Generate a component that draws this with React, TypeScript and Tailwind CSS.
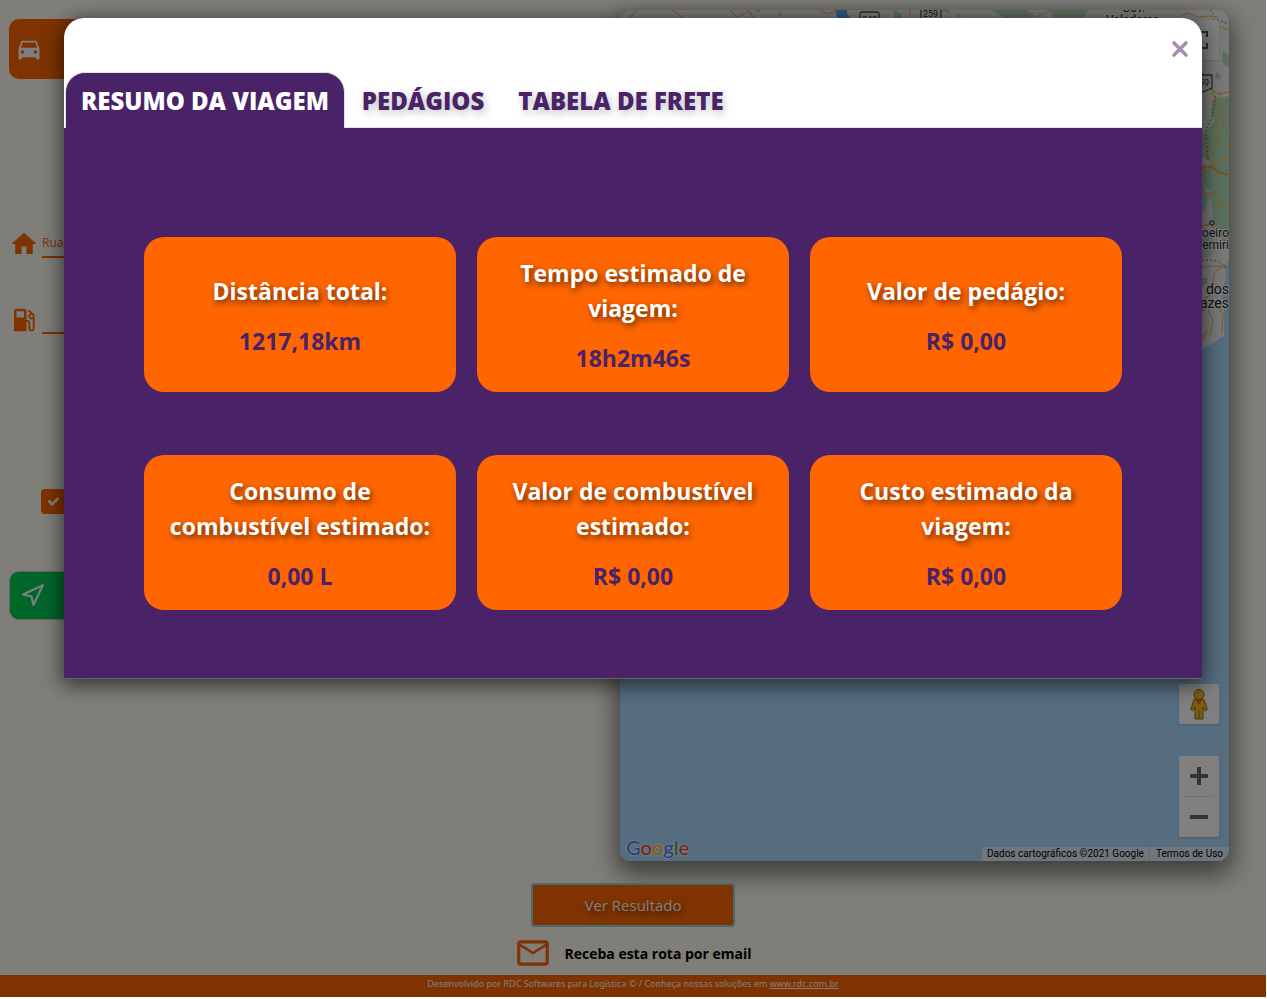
import React from "react";
import { MdDirectionsCar, MdHome, MdLocalGasStation, MdMailOutline } from "react-icons/md";
import { FaCheck } from "react-icons/fa";
import { FiNavigation } from "react-icons/fi";

const tabs = ["RESUMO DA VIAGEM", "PEDÁGIOS", "TABELA DE FRETE"];

const cards = [
  { title: "Distância total:", value: "1217,18km" },
  { title: "Tempo estimado de viagem:", value: "18h2m46s" },
  { title: "Valor de pedágio:", value: "R$ 0,00" },
  { title: "Consumo de combustível estimado:", value: "0,00 L" },
  { title: "Valor de combustível estimado:", value: "R$ 0,00" },
  { title: "Custo estimado da viagem:", value: "R$ 0,00" },
];

const google = [
  { letter: "G", color: "text-[#4285f4]" },
  { letter: "o", color: "text-[#ea4335]" },
  { letter: "o", color: "text-[#fbbc05]" },
  { letter: "g", color: "text-[#4285f4]" },
  { letter: "l", color: "text-[#34a853]" },
  { letter: "e", color: "text-[#ea4335]" },
];

function MapDrawing() {
  return (
    <svg
      viewBox="0 0 609 851"
      preserveAspectRatio="xMaxYMin slice"
      className="absolute inset-0 h-full w-full"
      aria-hidden="true"
    >
      <rect width="609" height="851" fill="#aadaff" />
      <path d="M0 0H609V250L605 258L606 268L602 280L604 300V326L582 340L500 380H0Z" fill="#f3f3f3" />
      <g fill="#b5dfbd">
        <path d="M159 2l4 3 -5 3zM274 0l8 4v4h-8zM372 0h34l8 8h-30zM430 0h38l-4 8h-30zM337 3l5 4h-5z" />
        <path d="M596 62l5 3 -1 5 -5-2zM592 90l17-4V240L600 236L594 214L588 208L582 202V120L590 112z" />
        <path d="M582 268l6 0 -1 5 -5 4zM603 40l6 6v12l-7-6z" />
      </g>
      <g fill="#eeeeec">
        <path d="M584 22l6 8 -2 14 -6-6zM582 146l8 6 -2 8 -6-4zM584 176l8 6 -3 8zM590 182l-4 16 -4 6v40h18l2-16 -9-10 -1-20z" />
        <path d="M582 90l8 10 4 12 -6 8 -6 4z" />
      </g>
      <path d="M582 228l10 0 6 10 -8 8 -8 4z" fill="#b5dfbd" opacity="0.6" />
      <path d="M215 0h12v4l4 4h-14z" fill="#6aaef5" />
      <g fill="none" stroke="#f4c35a" strokeWidth="1.3">
        <path d="M17 0l-8 8M52 0l12 8M110 0l7 7 12-6 5 7M136 1h4M200 0l8 4 6-2M290 0v8M322 0l8 2M404 0l12 7 10-4 7-5 6 8M560 6l8-3 10 4 14-1 5 10 12 4M581 60l10 20 8 4 10-2" />
        <path d="M582 64l10 15 3 13 6-10M609 90l-8 8 -6 20 4 16 -8 12M600 104l4 12 5 10M582 124l8 8 -3 14 7 9" />
        <path d="M582 164l9-5 9-9 9-2M584 184l10-2 6 12 9 3M582 216l9-2 9 12 9-5M582 230l12 10 15-12" />
        <path d="M582 257q18-2 23 1M582 291l10-8 2-20 12-9M588 300l5 10 -3 16M595 292l8 12 -1 18M582 332l5-12" />
      </g>
      <path d="M582 157q10-2 16 5l11 3M582 238l10 1 17-4M582 301l10-7" fill="none" stroke="#eda93a" strokeWidth="2" />
      <path d="M582 251q14-4 24 7M588 150l-2-30 6-12 4-24M590 0l8 10 11 4" fill="none" stroke="#777" strokeDasharray="2 2" />
      <g fill="#f3f3f3" stroke="#555" strokeWidth="1.3">
        <rect x="240" y="2" width="19" height="14" rx="2" />
        <rect x="301" y="-6" width="20" height="18" rx="2" />
        <path d="M572 65h20v13l-10 4 -10-2z" />
        <circle cx="592" cy="213" r="2" />
      </g>
      <g className="font-['Roboto',sans-serif]" fill="#222" fontSize="9">
        <text x="242" y="13">040</text>
        <text x="303" y="7">259</text>
        <text x="574" y="76">259</text>
      </g>
      <g className="font-['Roboto',sans-serif]" fill="#222" stroke="#fff" strokeWidth="2" paintOrder="stroke" fontSize="12">
        <text x="502" y="2">Gov.</text>
        <text x="486" y="14">Valadares</text>
        <g textAnchor="end">
          <text x="609" y="227">Cachoeiro</text>
          <text x="609" y="239">de Itapemiri</text>
          <text x="609" y="284" fontSize="14">Campos dos</text>
          <text x="609" y="298" fontSize="14">Goytacazes</text>
        </g>
      </g>
    </svg>
  );
}

function Pegman() {
  return (
    <svg viewBox="0 0 20 32" className="h-8 w-5" aria-hidden="true">
      <path
        d="M5 11.500Q10 8 15 11.500L18.300 21.500L16.300 23L14 19V31H6V19L3.700 23L1.700 21.500Z"
        fill="#fbb917"
        stroke="#8a6a35"
        strokeWidth="1"
      />
      <path d="M10 22V31" stroke="#8a6a35" />
      <path d="M6 11h8l-4 6z" fill="#e8672a" />
      <circle cx="10" cy="6.500" r="5" fill="#fbb917" stroke="#8a6a35" />
    </svg>
  );
}

function MapPanel() {
  return (
    <section
      aria-label="Mapa"
      className="relative flex h-[851px] w-[609px] shrink-0 flex-col overflow-hidden rounded-[12px] bg-[#aadaff]"
    >
      <MapDrawing />
      <div className="relative flex grow flex-col items-end px-[10px] pt-[10px] pb-6">
        <button aria-label="Tela cheia" className="flex size-10 items-center justify-center rounded-[2px] bg-white shadow">
          <svg viewBox="0 0 18 18" className="size-[18px]" fill="none" stroke="#555" strokeWidth="2">
            <path d="M1 6V1H6M12 1H17V6M17 12V17H12M6 17H1V12" />
          </svg>
        </button>
        <button aria-label="Street View" className="mt-auto flex size-10 items-center justify-center rounded-[2px] bg-white shadow">
          <Pegman />
        </button>
        <div className="mt-8 flex w-10 flex-col items-center rounded-[2px] bg-white shadow">
          <button aria-label="Aumentar" className="flex size-10 items-center justify-center">
            <svg viewBox="0 0 18 18" className="size-[18px]" stroke="#666" strokeWidth="4">
              <path d="M9 0V18M0 9H18" />
            </svg>
          </button>
          <span className="h-px w-[30px] bg-[#e6e6e6]" />
          <button aria-label="Diminuir" className="flex size-10 items-center justify-center">
            <svg viewBox="0 0 18 18" className="size-[18px]" stroke="#666" strokeWidth="4">
              <path d="M0 9H18" />
            </svg>
          </button>
        </div>
      </div>
      <div className="absolute bottom-0 left-[6px] font-['Lato',sans-serif] text-[20px] leading-7 font-medium [text-shadow:0_0_2px_#fff,0_0_2px_#fff,0_0_2px_#fff]">
        {google.map((g, i) => (
          <span key={i} className={g.color}>
            {g.letter}
          </span>
        ))}
      </div>
      <div className="absolute right-0 bottom-0 flex gap-px font-['Roboto',sans-serif] text-[10px] leading-[14px] text-black">
        <span className="bg-[#f5f5f5]/70 px-[5px]">Dados cartográficos ©2021 Google</span>
        <a href="#termos" className="bg-[#f5f5f5]/70 px-[6px]">
          Termos de Uso
        </a>
      </div>
    </section>
  );
}

function RouteForm() {
  return (
    <form className="flex min-w-0 flex-1 flex-col pt-[9px] pr-8 pl-[9px]">
      <button type="button" aria-label="Veículo" className="flex h-[60px] items-center rounded-[10px] bg-[#ff6600] pl-[6px] text-white">
        <MdDirectionsCar size={28} />
      </button>
      <label className="mt-[150px] flex h-[30px] items-center gap-[3px] text-[#ff6600]">
        <MdHome size={30} className="shrink-0" />
        <input
          aria-label="Origem"
          defaultValue="Rua"
          className="h-[27px] min-w-0 flex-1 border-b-2 border-[#ff6600] pb-[2px] font-['Open_Sans',sans-serif] text-[12px] outline-none"
        />
      </label>
      <label className="mt-[46px] flex h-[30px] items-center gap-[3px] text-[#ff6600]">
        <MdLocalGasStation size={30} className="shrink-0" />
        <input
          aria-label="Combustível"
          className="h-[27px] min-w-0 flex-1 border-b-2 border-[#ff6600] text-[12px] outline-none"
        />
      </label>
      <button
        type="button"
        aria-label="Opção selecionada"
        className="mt-[154px] ml-8 flex size-[25px] items-center justify-center rounded-[4px] bg-[#ff6600] text-white"
      >
        <FaCheck size={11} stroke="currentColor" strokeWidth={40} />
      </button>
      <button
        type="button"
        aria-label="Traçar rota"
        className="mt-[57px] flex h-[49px] items-center rounded-[10px] border border-[#ccc] bg-[#00cc55] pl-[10px] text-white"
      >
        <FiNavigation size={25} strokeWidth={2} />
      </button>
    </form>
  );
}

function Page() {
  return (
    <div className="flex flex-1 flex-col bg-[#fffcf3]">
      <main className="flex grow flex-col">
        <div className="flex pt-[10px] pr-[37px]">
          <RouteForm />
          <div className="rounded-[12px] shadow-[0_10px_24px_4px_rgba(0,0,0,0.5)]">
            <MapPanel />
          </div>
        </div>
        <div className="mt-[22px] flex flex-col items-center">
          <button className="h-11 w-[204px] rounded-[4px] border-2 border-[#8fd3d6] bg-[#ff6600] text-[15px] text-white [text-shadow:2px_3px_6px_rgba(0,0,0,0.6)]">
            Ver Resultado
          </button>
          <a href="#email" className="mt-2 flex h-9 items-center gap-3 text-[14px] font-bold text-black">
            <MdMailOutline size={38} className="text-[#ff6600]" />
            Receba esta rota por email
          </a>
        </div>
      </main>
      <footer className="h-[22px] bg-[#ff6600] text-center font-['Noto_Sans',sans-serif] text-[9px] leading-[18px] text-white">
        Desenvolvido por RDC Softwares para Logística © / Conheça nossas soluções em{" "}
        <a href="#rdc" className="underline">
          www.rdc.com.br
        </a>
      </footer>
    </div>
  );
}

function TripDialog() {
  return (
    <div
      role="dialog"
      aria-modal="true"
      aria-label="Resumo da viagem"
      className="flex-1 overflow-hidden rounded-t-[20px] border-b border-[#666] bg-white shadow-[0_4px_20px_2px_rgba(0,0,0,0.6)]"
    >
      <div className="flex h-[54px] items-center justify-end pt-2 pr-[13px]">
        <button aria-label="Fechar" className="text-[#a48fb3]">
          <svg viewBox="0 0 18 18" className="size-[18px]" stroke="currentColor" strokeWidth="3.600" strokeLinecap="round">
            <path d="M3 3L15 15M15 3L3 15" />
          </svg>
        </button>
      </div>
      <div role="tablist" className="flex border-b border-[#dee2e6] pl-px">
        {tabs.map((t, i) => (
          <button
            key={t}
            role="tab"
            aria-selected={i === 0}
            className={
              i === 0
                ? "-mb-px h-14 rounded-t-[20px] border border-b-0 border-[#dee2e6] bg-[#4a2268] px-[15px] pt-px text-[24px] font-extrabold text-white"
                : "h-[55px] px-[17px] pt-[3px] text-[24px] font-extrabold text-[#4a2268] [text-shadow:2px_3px_8px_rgba(0,0,0,0.25)]"
            }
          >
            {t}
          </button>
        ))}
      </div>
      <div role="tabpanel" className="grid grid-cols-3 gap-x-[21px] gap-y-[63px] bg-[#4a2268] px-20 pt-[109px] pb-[68px]">
        {cards.map((c) => (
          <article
            key={c.title}
            className="flex h-[155px] flex-col items-center justify-center gap-[15px] rounded-[20px] bg-[#ff6600] px-6 pt-[3px] text-center text-[23px] leading-[35px] font-bold"
          >
            <h2 className="text-white [text-shadow:2px_3px_6px_rgba(0,0,0,0.6)]">{c.title}</h2>
            <p className="text-[#4a2268]">{c.value}</p>
          </article>
        ))}
      </div>
    </div>
  );
}

export default function App() {
  return (
    <div className="relative flex min-h-screen flex-col bg-white pr-px pb-[2px] font-['Open_Sans',sans-serif]">
      <Page />
      <div className="absolute inset-x-0 top-0 bottom-[2px] mr-px flex items-start bg-black/50 px-16 pt-[18px]">
        <TripDialog />
      </div>
    </div>
  );
}
